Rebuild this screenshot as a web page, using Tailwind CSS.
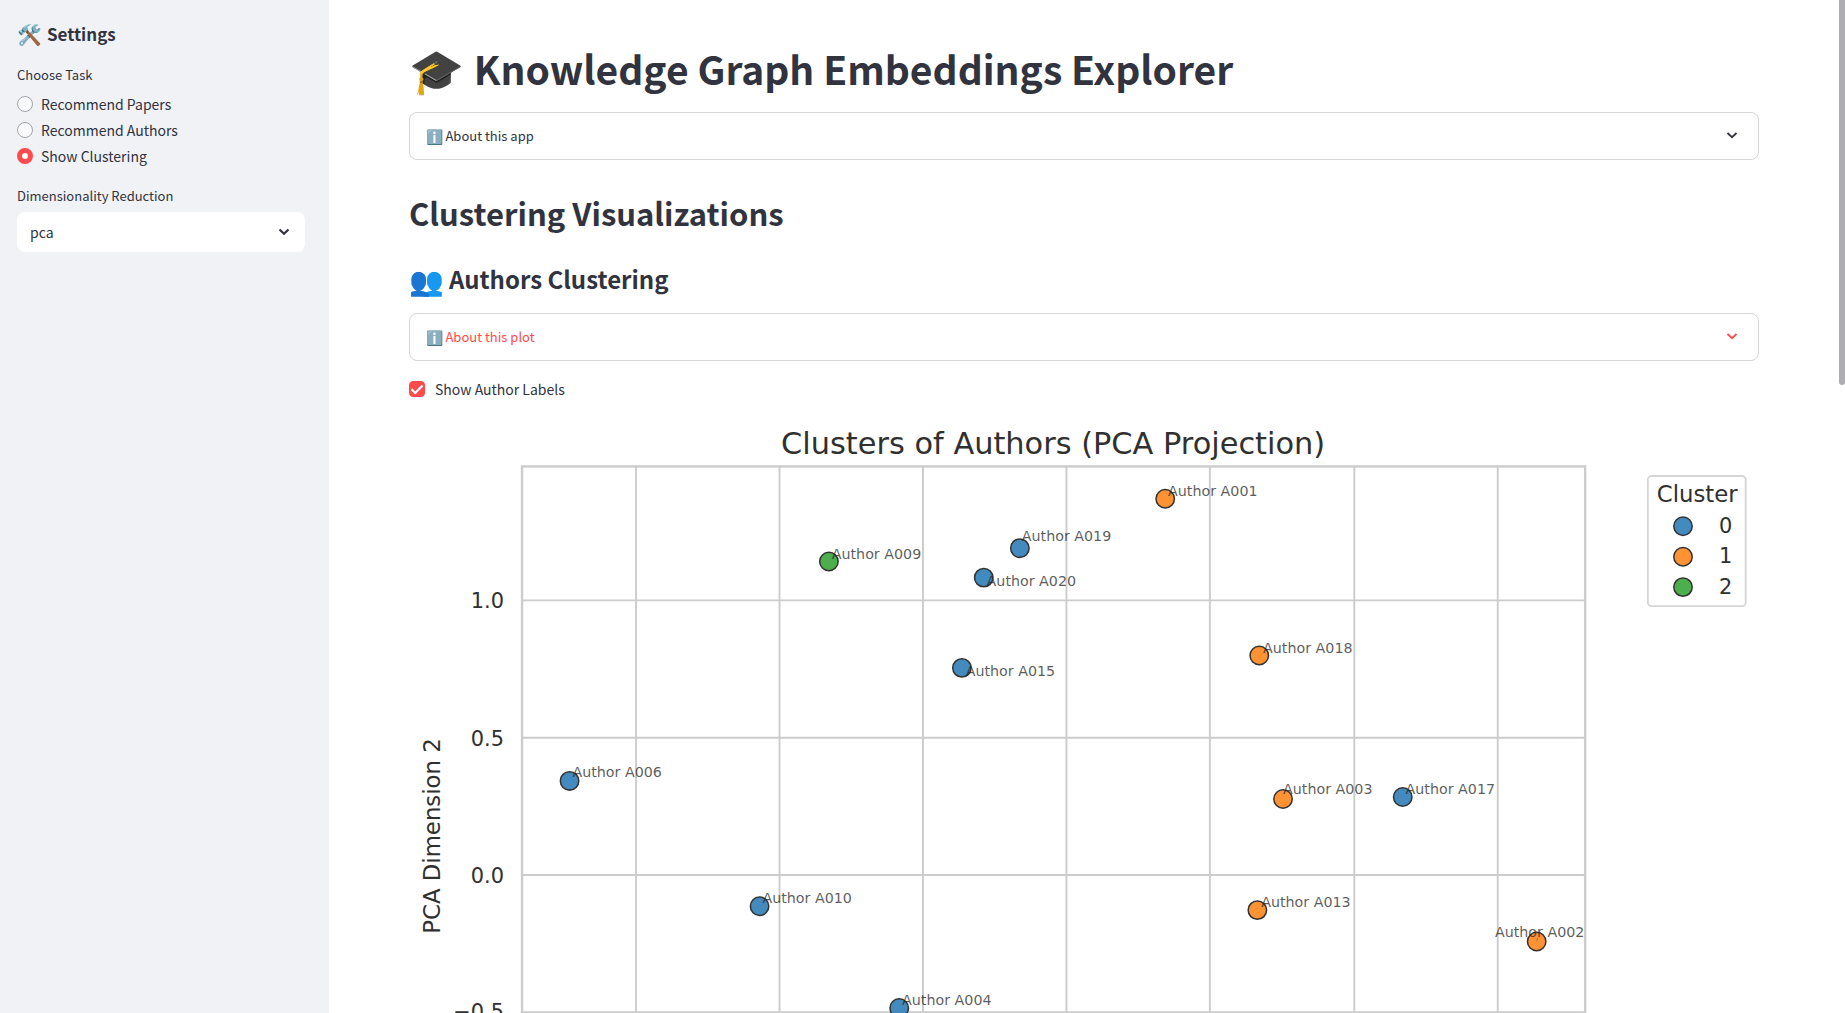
<!DOCTYPE html>
<html lang="en">
<head>
<meta charset="utf-8">
<title>Knowledge Graph Embeddings Explorer</title>
<script src="https://cdn.jsdelivr.net/npm/@tailwindcss/browser@4"></script>
</head>
<body class="flex h-screen overflow-hidden bg-white font-['Noto_Sans_CJK_SC','Noto_Color_Emoji',sans-serif] text-sm text-[#31333f]">
<aside class="w-[329px] shrink-0 bg-[#f0f2f6] px-[17px] pt-[19px]">
  <h2 class="flex items-center gap-[5px] text-[17px] leading-[30px] font-bold"><span class="text-xl leading-[30px]">🛠️</span>Settings</h2>
  <fieldset class="mt-[17px]">
    <legend class="text-[13px] leading-[18px]">Choose Task</legend>
    <div class="mt-2 flex flex-col gap-[2px]">
      <label class="flex h-6 items-center gap-2"><input type="radio" name="task" class="size-4 appearance-none rounded-full border border-[#a3a4aa] bg-[#f9f9fb] checked:border-[5px] checked:border-[#ff4b4b] checked:bg-white">Recommend Papers</label>
      <label class="flex h-6 items-center gap-2"><input type="radio" name="task" class="size-4 appearance-none rounded-full border border-[#a3a4aa] bg-[#f9f9fb] checked:border-[5px] checked:border-[#ff4b4b] checked:bg-white">Recommend Authors</label>
      <label class="flex h-6 items-center gap-2"><input type="radio" name="task" checked class="size-4 appearance-none rounded-full border border-[#a3a4aa] bg-[#f9f9fb] checked:border-[5px] checked:border-[#ff4b4b] checked:bg-white">Show Clustering</label>
    </div>
  </fieldset>
  <label for="reduction" class="mt-[19px] block text-[13px] leading-[18px]">Dimensionality Reduction</label>
  <div class="mt-[7px] mr-[7px] grid items-center">
    <select id="reduction" class="col-start-1 row-start-1 h-10 appearance-none rounded-lg bg-white px-[13px]"><option>pca</option><option>tsne</option></select>
    <svg class="pointer-events-none col-start-1 row-start-1 mr-[15px] size-3 justify-self-end" viewBox="0 0 12 12" fill="none" stroke="#31333f" stroke-width="2.200"><path d="M1.500 3.500 6 7.800l4.500-4.300"/></svg>
  </div>
</aside>
<main class="relative min-w-0 flex-1 overflow-hidden pr-[86px] pl-20">
  <h1 class="mt-[38px] flex items-center gap-[10px] text-[39px] leading-[60px] font-bold"><span class="text-[44px] leading-[60px]">🎓</span>Knowledge Graph Embeddings Explorer</h1>
  <details class="mt-[14px] rounded-lg border border-[#d6d6d9]">
    <summary class="flex h-[46px] list-none items-center gap-[2px] px-4 text-[13px]"><span class="text-sm">ℹ️</span>About this app
      <svg class="ml-auto mr-1 size-3" viewBox="0 0 12 12" fill="none" stroke="#31333f" stroke-width="1.800"><path d="M1.500 3 6 7.200l4.500-4.200"/></svg></summary>
    <p class="px-4 pb-4">Explore embeddings of papers and authors.</p>
  </details>
  <h2 class="mt-[27px] text-[31px] leading-[52px] font-bold">Clustering Visualizations</h2>
  <h3 class="mt-5 flex items-center gap-[5px] text-2xl leading-10 font-bold"><span class="text-[28px] leading-10">👥</span>Authors Clustering</h3>
  <details class="mt-[14px] rounded-lg border border-[#d6d6d9]">
    <summary class="flex h-[46px] list-none items-center gap-[2px] px-4 text-[13px] text-[#ff4b4b]"><span class="text-sm">ℹ️</span>About this plot
      <svg class="ml-auto mr-1 size-3" viewBox="0 0 12 12" fill="none" stroke="#ff4b4b" stroke-width="1.800"><path d="M1.500 3 6 7.200l4.500-4.200"/></svg></summary>
    <p class="px-4 pb-4">Each point is an author.</p>
  </details>
  <label class="mt-4 flex h-6 items-center gap-[10px]">
    <span class="grid items-center justify-items-center">
      <input type="checkbox" checked class="col-start-1 row-start-1 size-4 appearance-none rounded border border-[#a3a4aa] checked:border-[#ff4b4b] checked:bg-[#ff4b4b]">
      <svg class="pointer-events-none col-start-1 row-start-1 size-4" viewBox="0 0 16 16" fill="none" stroke="#fff" stroke-width="2.200"><path d="M2.500 8.200 6.200 12 13.500 4.500"/></svg>
    </span>Show Author Labels</label>
  <svg class="mt-[17px] block w-full font-['DejaVu_Sans',sans-serif]" viewBox="0 0 1421 1000" role="img" aria-label="Clusters of Authors (PCA Projection)">
    <g stroke="#ccc" stroke-width="2" fill="none">
      <path d="M239 51V950M390 51V950M541 51V950M692 51V950M843 51V950M995 51V950M1146 51V950"/>
      <path d="M119 192H1238M119 336.500H1238M119 481H1238M119 625.500H1238M119 770H1238M119 914H1238"/>
      <rect x="119" y="51" width="1119" height="899" stroke-width="2.500"/>
      <rect x="1304" y="61" width="103" height="137" rx="4" stroke="#d6d6d6"/>
    </g>
    <g fill="#303030">
      <text x="678" y="38" font-size="32" text-anchor="middle">Clusters of Authors (PCA Projection)</text>
      <text transform="translate(33 440) rotate(-90)" font-size="24" text-anchor="middle">PCA Dimension 2</text>
      <text x="1356" y="88" font-size="24" text-anchor="middle">Cluster</text>
      <g font-size="22" text-anchor="end">
        <text x="100" y="200">1.0</text><text x="100" y="345">0.5</text><text x="100" y="489">0.0</text><text x="100" y="633">−0.5</text>
      </g>
      <g font-size="22"><text x="1379" y="121">0</text><text x="1379" y="153">1</text><text x="1379" y="185">2</text></g>
    </g>
    <g stroke="#333" stroke-width="1.600">
      <g fill="#438bbf">
        <circle cx="643" cy="137" r="9.700"/><circle cx="605" cy="168" r="9.700"/><circle cx="582" cy="263" r="9.700"/><circle cx="169" cy="382" r="9.700"/><circle cx="369" cy="514" r="9.700"/><circle cx="516" cy="621" r="9.700"/><circle cx="1046" cy="399" r="9.700"/><circle cx="1341" cy="114" r="9.700"/>
      </g>
      <g fill="#ff9232">
        <circle cx="796" cy="85" r="9.700"/><circle cx="895" cy="250" r="9.700"/><circle cx="920" cy="401" r="9.700"/><circle cx="893" cy="518" r="9.700"/><circle cx="1187" cy="551" r="9.700"/><circle cx="1341" cy="146" r="9.700"/>
      </g>
      <g fill="#4dae4d"><circle cx="442" cy="151" r="9.700"/><circle cx="1341" cy="178" r="9.700"/></g>
    </g>
    <path d="M1187 551l1-4" stroke="#808080"/>
    <g font-size="15" fill="#262626" fill-opacity="0.750">
      <text x="799" y="82">Author A001</text><text x="1143" y="546">Author A002</text><text x="920" y="396">Author A003</text><text x="519" y="618">Author A004</text><text x="172" y="378">Author A006</text><text x="445" y="148">Author A009</text><text x="372" y="511">Author A010</text><text x="897" y="515">Author A013</text><text x="586" y="272">Author A015</text><text x="1049" y="396">Author A017</text><text x="899" y="247">Author A018</text><text x="645" y="130">Author A019</text><text x="608" y="177">Author A020</text>
    </g>
  </svg>
  <div class="absolute top-0 right-0 h-[38%] w-[6px] rounded-b-full bg-[#adadb2]"></div>
</main>
</body>
</html>
